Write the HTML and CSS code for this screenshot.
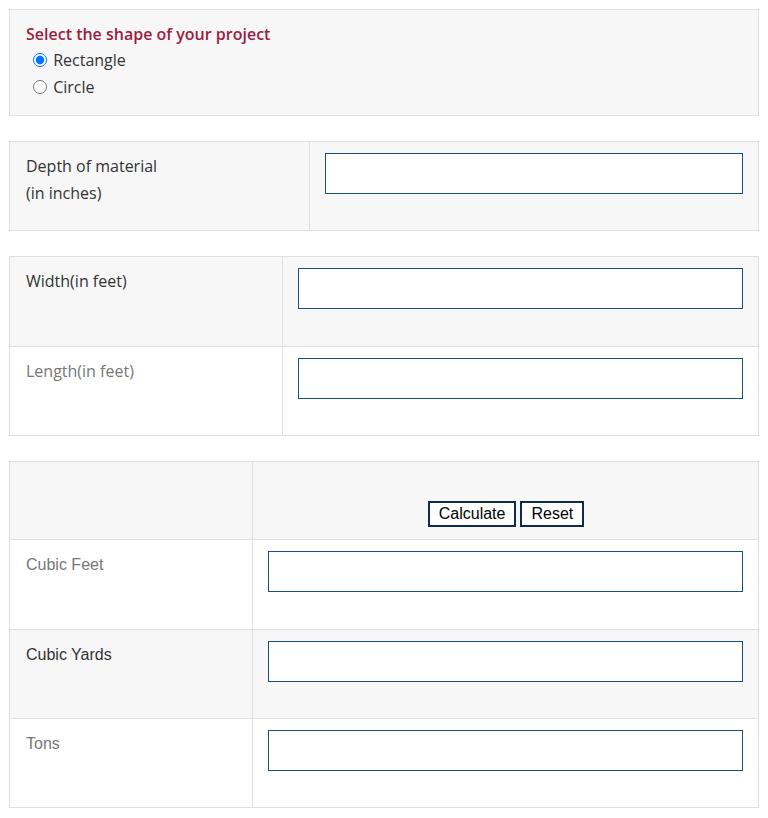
FILE: index.html
```html
<!DOCTYPE html>
<html lang="en">
<head>
<meta charset="utf-8">
<title>Material Calculator</title>
<link rel="stylesheet" href="styles.css">
</head>
<body>
  <div class="box shape">
    <div class="title">Select the shape of your project</div>
    <div class="options">
      <label class="opt"><input type="radio" name="shape" checked> Rectangle</label>
      <label class="opt"><input type="radio" name="shape"> Circle</label>
    </div>
  </div>

  <div class="box grid g-depth">
    <div class="cell label dark">Depth of material<br>(in inches)</div>
    <div class="cell field"><input class="txt" type="text"></div>
  </div>

  <div class="box grid g-dims">
    <div class="cell label dark shaded">Width(in feet)</div>
    <div class="cell field shaded"><input class="txt" type="text"></div>
    <div class="cell label grey line">Length(in feet)</div>
    <div class="cell field line"><input class="txt" type="text"></div>
  </div>

  <div class="box grid g-result">
    <div class="cell label shaded short"></div>
    <div class="cell buttons shaded short">
      <button class="btn" type="button">Calculate</button>
      <button class="btn" type="button">Reset</button>
    </div>
    <div class="cell label arial grey line">Cubic Feet</div>
    <div class="cell field line"><input class="txt" type="text"></div>
    <div class="cell label arial dark shaded line">Cubic Yards</div>
    <div class="cell field shaded line"><input class="txt" type="text"></div>
    <div class="cell label arial grey line">Tons</div>
    <div class="cell field line"><input class="txt" type="text"></div>
  </div>
</body>
</html>
```

FILE: styles.css
```css
* { box-sizing: border-box; }

html, body {
  margin: 0;
  background: #ffffff;
}

body {
  padding: 9px;
  font-family: "Open Sans", "Liberation Sans", sans-serif;
  font-size: 16px;
  color: #333333;
}

.box {
  border: 1px solid #e0e0e0;
  margin-bottom: 25px;
}

.shape {
  background: #f7f7f7;
  padding: 12px 16px 14px 16px;
  height: 107px;
}

.title {
  color: #9d1c3e;
  font-weight: 600;
  line-height: 24px;
}

.options {
  padding-left: 2px;
  padding-top: 1px;
}

.opt {
  display: block;
  line-height: 27px;
  color: #333333;
}

.opt input {
  margin: 0 2px 0 5px;
  width: 14px;
  height: 14px;
  vertical-align: -1px;
}

.grid {
  display: grid;
}

.g-depth { grid-template-columns: 300px 1fr; background: #f7f7f7; }
.g-dims { grid-template-columns: 273px 1fr; }
.g-result { grid-template-columns: 243px 1fr; margin-bottom: 0; }

.cell {
  min-height: 88.4px;
}

.cell.line {
  min-height: 89.4px;
}

.label {
  padding: 11px 16px;
  line-height: 27px;
  border-right: 1px solid #e0e0e0;
}

.arial {
  font-family: "Liberation Sans", Arial, sans-serif;
}

.dark { color: #333333; }
.grey { color: #777777; }

.shaded { background: #f7f7f7; }

.line { border-top: 1px solid #e0e0e0; }

.field {
  padding: 11px 15px 11px 15px;
}

.txt {
  display: block;
  width: 100%;
  height: 41px;
  margin: 0;
  border: 1px solid #1b4e7e;
  background: #ffffff;
  padding: 0 8px;
  font: inherit;
  outline: none;
}

.cell.short {
  min-height: 77px;
}

.buttons {
  display: flex;
  justify-content: center;
  align-items: flex-end;
  gap: 4px;
  padding: 0 0 12px 1px;
}

.btn {
  font-family: "Liberation Sans", Arial, sans-serif;
  font-size: 16px;
  line-height: 18px;
  color: #000000;
  background: #ffffff;
  border: 2px solid #0f2c4c;
  padding: 2px 9px;
  margin: 0;
  border-radius: 0;
}
```
